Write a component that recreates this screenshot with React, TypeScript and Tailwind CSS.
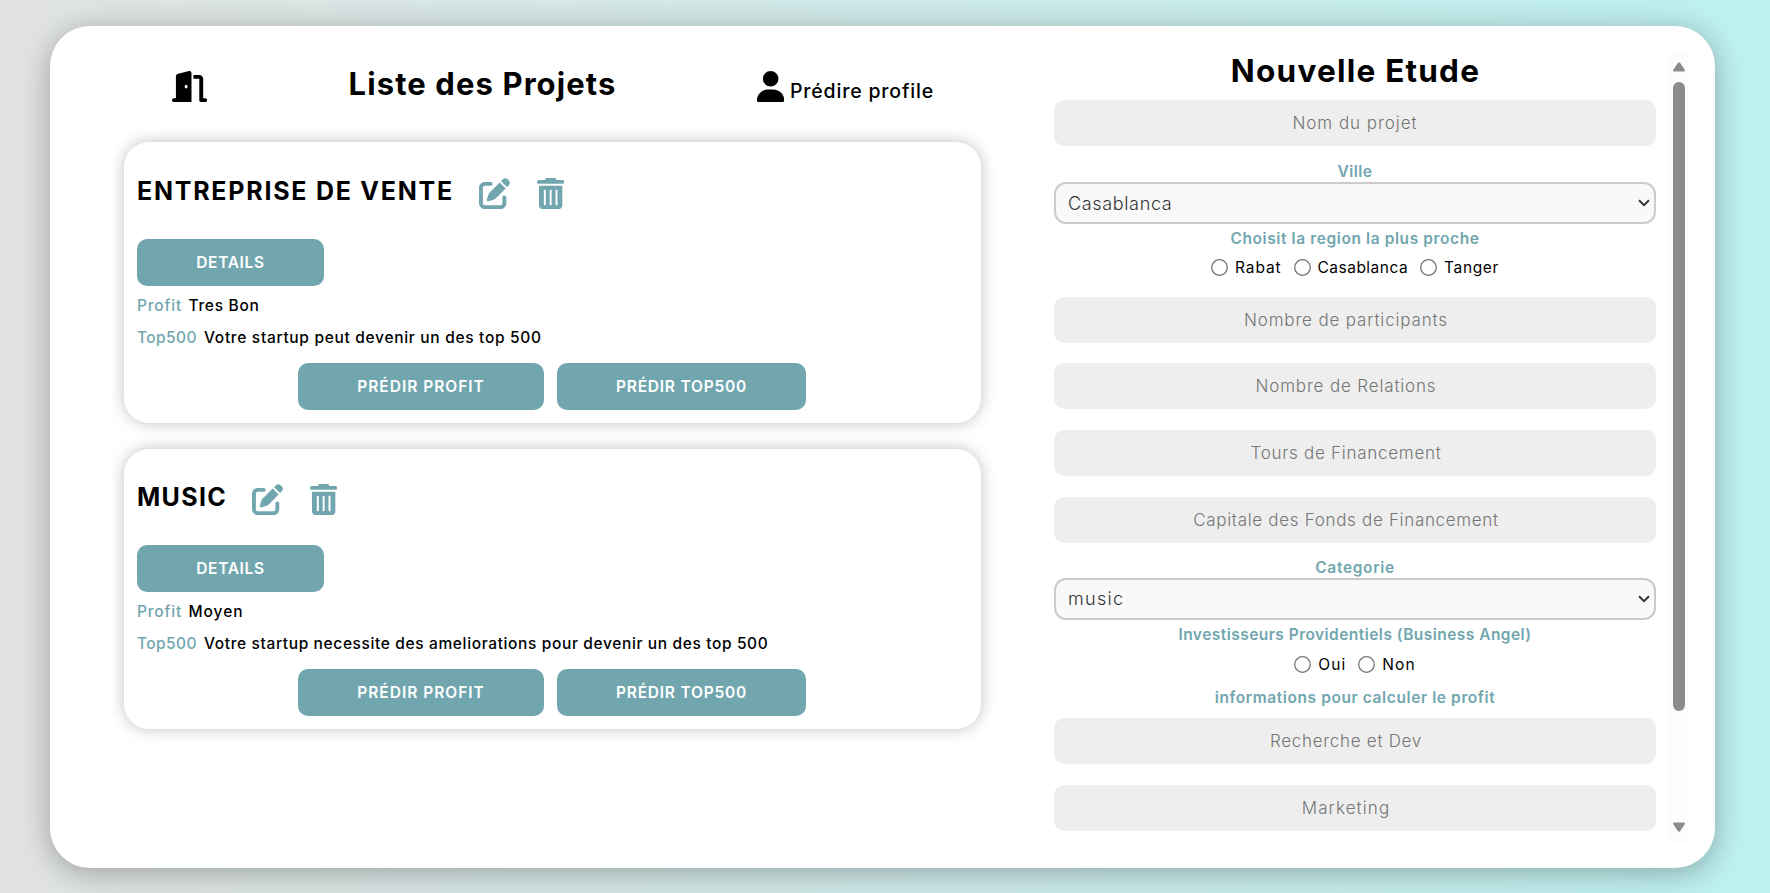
import { FaDoorOpen, FaPenToSquare, FaTrashCan, FaUser } from "react-icons/fa6";

type Fact = { label: string; labelClass: string; value: string; valueClass: string };
type Project = {
  name: string;
  nameClass: string;
  headClass: string;
  facts: Fact[];
};

const PROJECTS: Project[] = [
  {
    name: "ENTREPRISE DE VENTE",
    nameClass: "w-[342px] tracking-[1.75px]",
    headClass: "h-[97px] pt-[34px]",
    facts: [
      { label: "Profit", labelClass: "w-[51.5px] tracking-[0.81px]", value: "Tres Bon", valueClass: "tracking-[0.7px]" },
      {
        label: "Top500",
        labelClass: "w-[67px] tracking-[0.42px]",
        value: "Votre startup peut devenir un des top 500",
        valueClass: "tracking-[0.69px]",
      },
    ],
  },
  {
    name: "MUSIC",
    nameClass: "w-[115px] tracking-[1.31px]",
    headClass: "h-[96px] pt-[33px]",
    facts: [
      { label: "Profit", labelClass: "w-[51.5px] tracking-[0.81px]", value: "Moyen", valueClass: "tracking-[0.95px]" },
      {
        label: "Top500",
        labelClass: "w-[67px] tracking-[0.42px]",
        value: "Votre startup necessite des ameliorations pour devenir un des top 500",
        valueClass: "tracking-[0.63px]",
      },
    ],
  },
];

function Button({ label, className }: { label: string; className: string }) {
  return (
    <button
      className={`flex h-[47px] items-center justify-center rounded-[10px] bg-[#71a6af] pt-px text-[15.5px] font-semibold whitespace-nowrap text-white ${className}`}
    >
      {label}
    </button>
  );
}

function ProjectCard({ project }: { project: Project }) {
  return (
    <article className="rounded-[25px] bg-white px-[13px] pb-[13px] shadow-[0_0_15px_rgba(0,0,0,0.25)]">
      <div className={`flex items-start ${project.headClass}`}>
        <h2 className={`text-[25px] leading-[30px] font-bold whitespace-nowrap ${project.nameClass}`}>
          {project.name}
        </h2>
        <FaPenToSquare className="mt-[2px] h-[31.2px] w-[31.2px] text-[#71a6af]" />
        <FaTrashCan className="mt-[2px] ml-[26.6px] h-[31.2px] w-[27.3px] text-[#71a6af]" />
      </div>
      <Button label="DETAILS" className="w-[187px] tracking-[0.66px]" />
      <div className="mt-1">
        {project.facts.map((f) => (
          <p key={f.label} className="flex h-8 items-center text-[15.5px] leading-6 font-medium whitespace-nowrap">
            <span className={`text-[#71a6af] ${f.labelClass}`}>{f.label}</span>
            <span className={f.valueClass}>{f.value}</span>
          </p>
        ))}
      </div>
      <div className="mt-[9px] flex justify-center gap-[13px] pr-px">
        <Button label="PRÉDIR PROFIT" className="w-[246px] tracking-[0.99px]" />
        <Button label="PRÉDIR TOP500" className="w-[249px] tracking-[0.79px]" />
      </div>
    </article>
  );
}

function Field({ placeholder, className }: { placeholder: string; className: string }) {
  return (
    <input
      type="text"
      placeholder={placeholder}
      className={`block h-[46px] w-full rounded-[10px] bg-[#eeeeee] text-center text-[17px] font-light outline-none placeholder:text-[#757575] ${className}`}
    />
  );
}

function Label({ text, className }: { text: string; className: string }) {
  return (
    <p className={`text-center text-[15.5px] leading-5 font-semibold whitespace-nowrap text-[#71a6af] ${className}`}>
      {text}
    </p>
  );
}

function Select({ value, className }: { value: string; className: string }) {
  return (
    <div className="flex h-[41.5px] items-center justify-between rounded-[12px] border-2 border-[#cbcbcb] bg-[#f9f9f9] pr-[4.5px] pl-3">
      <span className={`text-[18px] font-light text-[#333] ${className}`}>{value}</span>
      <svg viewBox="0 0 12 8" className="h-2 w-3" fill="none" stroke="#333" strokeWidth="2">
        <path d="M1 1.2 6 6.2 11 1.2" />
      </svg>
    </div>
  );
}

function Radios({ options, className }: { options: { label: string; className: string }[]; className: string }) {
  return (
    <div className={`flex h-5 items-center justify-center gap-3 ${className}`}>
      {options.map((o) => (
        <label key={o.label} className="flex items-center gap-[7px]">
          <svg viewBox="0 0 17 17" className="size-[17px]" fill="#fff" stroke="#767676" strokeWidth="1.3">
            <circle cx="8.5" cy="8.5" r="7.8" />
          </svg>
          <span className={`pt-px text-[15.5px] leading-5 ${o.className}`}>{o.label}</span>
        </label>
      ))}
    </div>
  );
}

function ScrollBar() {
  return (
    <div className="mt-[26px] ml-[13px] flex h-[790px] w-5 flex-col items-center bg-[#fcfcfc]">
      <svg viewBox="0 0 12 10" className="mt-[10px] h-[10px] w-3" fill="#8b8b8b">
        <path d="M5 .8Q6-.4 7 .8L11.6 7.6Q12.4 9.5 11 9.5H1Q-.4 9.5.4 7.6Z" />
      </svg>
      <div className="mt-[10px] h-[629px] w-3 rounded-full bg-[#8b8b8b]" />
      <svg viewBox="0 0 12 10" className="mt-[111px] h-[10px] w-3" fill="#8b8b8b">
        <path d="M5 9.2Q6 10.4 7 9.2L11.6 2.4Q12.4.5 11 .5H1Q-.4.5.4 2.4Z" />
      </svg>
    </div>
  );
}

export default function App() {
  return (
    <div className="h-[893px] w-[1770px] overflow-hidden bg-[linear-gradient(to_right,#e1e3e2,#bdf1f0)] pt-[26px] pl-[50px] font-['Inter',sans-serif] text-black">
      <main className="flex h-[842px] w-[1665px] rounded-[40px] bg-white shadow-[0_5px_30px_rgba(0,0,0,0.3)]">
        <section className="ml-[74px] w-[857px]">
          <header className="flex h-[116px] items-start pl-[48px]">
            <FaDoorOpen className="mt-[45px] h-[31.2px] w-[35.1px]" />
            <h1 className="mt-[42px] ml-[141.5px] w-[268px] text-[31px] leading-8 font-bold tracking-[1.1px] whitespace-nowrap">
              Liste des Projets
            </h1>
            <FaUser className="mt-[45px] ml-[140.6px] h-[31.2px] w-[27.3px]" />
            <span className="mt-[53px] ml-[5.5px] text-[19.5px] leading-6 font-medium tracking-[0.82px] whitespace-nowrap">
              Prédire profile
            </span>
          </header>
          <div className="flex flex-col gap-[26px]">
            {PROJECTS.map((p) => (
              <ProjectCard key={p.name} project={p} />
            ))}
          </div>
        </section>

        <section className="mt-[26px] ml-[73px] w-[602px]">
          <h1 className="h-12 pl-px text-center text-[31.5px] leading-[37px] font-bold tracking-[1.23px]">
            Nouvelle Etude
          </h1>
          <Field placeholder="Nom du projet" className="tracking-[0.95px]" />
          <Label text="Ville" className="mt-[16px] mb-[0.3px] tracking-[0.48px]" />
          <Select value="Casablanca" className="tracking-[0.65px]" />
          <Label text="Choisit la region la plus proche" className="mt-[5.5px] tracking-[0.6px]" />
          <Radios
            className="mt-2 mb-[19.4px]"
            options={[
              { label: "Rabat", className: "tracking-[0.9px]" },
              { label: "Casablanca", className: "tracking-[0.48px]" },
              { label: "Tanger", className: "tracking-[0.63px]" },
            ]}
          />
          <div className="flex flex-col gap-[20.7px]">
            <Field placeholder="Nombre de participants" className="pr-[18px] tracking-[0.84px]" />
            <Field placeholder="Nombre de Relations" className="pr-[18px] tracking-[0.84px]" />
            <Field placeholder="Tours de Financement" className="pr-[18px] tracking-[0.72px]" />
            <Field placeholder="Capitale des Fonds de Financement" className="pr-[18px] tracking-[0.68px]" />
          </div>
          <Label text="Categorie" className="mt-[14.8px] mb-[0.7px] tracking-[0.67px]" />
          <Select value="music" className="tracking-[1.33px]" />
          <Label text="Investisseurs Providentiels (Business Angel)" className="mt-[5px] tracking-[0.46px]" />
          <Radios
            className="mt-[10px]"
            options={[
              { label: "Oui", className: "tracking-[1.1px]" },
              { label: "Non", className: "tracking-[1.1px]" },
            ]}
          />
          <Label text="informations pour calculer le profit" className="mt-[13px] mb-[10.5px] tracking-[0.6px]" />
          <div className="flex flex-col gap-[20.7px]">
            <Field placeholder="Recherche et Dev" className="pr-[18px] tracking-[0.71px]" />
            <Field placeholder="Marketing" className="pr-[18px] tracking-[1.09px]" />
          </div>
        </section>
        <ScrollBar />
      </main>
    </div>
  );
}
